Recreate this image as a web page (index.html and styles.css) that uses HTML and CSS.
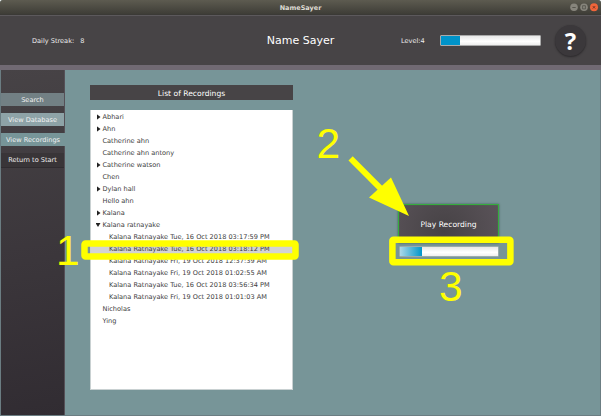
FILE: index.html
```
<!DOCTYPE html>
<html lang="en">
<head>
<meta charset="utf-8">
<title>NameSayer</title>
<link rel="stylesheet" href="styles.css">
</head>
<body>
<div class="window">
  <div class="titlebar">
    <span class="window-title">NameSayer</span>
    <svg class="controls" width="30" height="15" viewBox="0 0 30 15">
      <circle cx="4" cy="7.3" r="3.8" fill="#87857c"/>
      <path d="M2.3 7.5h3.4" stroke="#4b4a43" stroke-width=".8"/>
      <circle cx="14" cy="7.3" r="3.8" fill="#87857c"/>
      <path d="M12.6 5.7h2.8v3.2h-2.8z" fill="none" stroke="#4b4a43" stroke-width=".7"/>
      <circle cx="24" cy="7.3" r="4" fill="#f0653a"/>
      <path d="M22.8 6.1l2.4 2.4m0-2.4l-2.4 2.4" stroke="#6b3020" stroke-width=".9"/>
    </svg>
  </div>
  <header class="header">
    <div class="streak"><span>Daily Streak:</span><span>8</span></div>
    <h1 class="app-name">Name Sayer</h1>
    <div class="status">
      <span class="level">Level:4</span>
      <div class="bar level-bar"><div class="fill"></div></div>
      <div class="help">?</div>
    </div>
  </header>
  <div class="body">
    <nav class="sidebar">
      <div class="nav search">Search</div>
      <div class="nav database">View Database</div>
      <div class="nav recordings">View Recordings</div>
      <div class="nav return">Return to Start</div>
    </nav>
    <main class="main">
      <section class="list-column">
        <h2 class="list-title">List of Recordings</h2>
        <ul class="tree">
          <li class="closed">Abhari</li>
          <li class="closed">Ahn</li>
          <li>Catherine ahn</li>
          <li>Catherine ahn antony</li>
          <li class="closed">Catherine watson</li>
          <li>Chen</li>
          <li class="closed">Dylan hall</li>
          <li>Hello ahn</li>
          <li class="closed">Kalana</li>
          <li class="open">Kalana ratnayake</li>
          <li class="child">Kalana Ratnayake Tue, 16 Oct 2018 03:17:59 PM</li>
          <li class="child selected">Kalana Ratnayake Tue, 16 Oct 2018 03:18:12 PM</li>
          <li class="child">Kalana Ratnayake Fri, 19 Oct 2018 12:37:39 AM</li>
          <li class="child">Kalana Ratnayake Fri, 19 Oct 2018 01:02:55 AM</li>
          <li class="child">Kalana Ratnayake Tue, 16 Oct 2018 03:56:34 PM</li>
          <li class="child">Kalana Ratnayake Fri, 19 Oct 2018 01:01:03 AM</li>
          <li>Nicholas</li>
          <li>Ying</li>
        </ul>
      </section>
      <section class="player">
        <div class="play">Play Recording</div>
        <div class="bar play-bar"><div class="fill"></div></div>
      </section>
    </main>
  </div>
  <svg class="notes" width="601" height="416" viewBox="0 0 601 416">
    <rect x="84.5" y="243.500" width="211" height="13" rx="1"/>
    <rect x="392.4" y="239.8" width="118" height="22.4" rx="1"/>
    <path class="shaft" d="M350.6 158.4L382 189.8"/>
    <path class="head" d="M409 216L391 177.5L369 197.5Z"/>
    <text x="56" y="265">1</text>
    <text x="316.500" y="158.300">2</text>
    <text x="439" y="301">3</text>
  </svg>
</div>
</body>
</html>
```
FILE: styles.css
```
* { box-sizing: border-box; }
body { margin: 0; background: #fff; }
.window {
  position: relative;
  display: flex;
  flex-direction: column;
  width: 601px;
  height: 416px;
  overflow: hidden;
  border-radius: 3px 3px 0 0;
  background: #779598;
  font: 6.58px/12px "DejaVu Sans", sans-serif;
  color: #fff;
}
.titlebar {
  display: grid;
  grid-template-columns: 1fr auto 1fr;
  height: 15px;
  background: linear-gradient(#5d5b50, #3e3d37);
  border-bottom: 1px solid #3b3a36;
}
.window-title {
  grid-column: 2;
  font-size: 6.5px;
  line-height: 16px;
  font-weight: bold;
  color: #dfdbd2;
}
.controls { justify-self: end; margin-right: 1px; }
.header {
  display: grid;
  grid-template-columns: 200px 201px 200px;
  align-items: center;
  height: 55px;
  background: #474446;
  border-top: 1px solid #5c595c;
  border-bottom: 5px solid #716a73;
}
.streak { display: flex; gap: 6px; padding-left: 32px; color: #eee; }
.app-name { margin: 0; text-align: center; font-size: 11px; font-weight: normal; line-height: 16px; }
.status { display: flex; align-items: center; }
.level { width: 39px; color: #eee; }
.bar {
  border: 1px solid #aaa;
  border-radius: 1px;
  background: linear-gradient(#e8e8e8, #fff 60%, #eee);
}
.bar .fill { height: 100%; }
.level-bar { width: 101px; height: 11px; }
.level-bar .fill { width: 19px; background: #0093c9; }
.help {
  width: 31px;
  height: 31px;
  margin-left: 14px;
  border-radius: 50%;
  background: #3b383b;
  box-shadow: 0 1px 2px #2a282a;
  text-align: center;
  font: bold 24px/31px "Open Sans", sans-serif;
}
.body { display: flex; flex: 1; border: 1px solid #6b7d82; border-top: 0; }
.sidebar {
  display: flex;
  flex-direction: column;
  gap: 7px;
  width: 64px;
  padding-top: 23px;
  border-right: 1px solid #555057;
  background: linear-gradient(170deg, #474346, #3b363b 55%, #312c32);
}
.nav { height: 13px; line-height: 14px; text-align: center; color: #f1f1f1; white-space: nowrap; }
.search { background: #728084; }
.database { background: #8ea3a7; }
.recordings { background: #779598; margin-right: -1px; }
.return { height: 15px; background: #393538; border-bottom: 1px solid #302c30; }
.main { display: flex; flex: 1; padding: 15px 0 0 25px; }
.list-column { width: 203px; }
.list-title {
  height: 15px;
  margin: 0 0 10px;
  background: #474446;
  text-align: center;
  font-size: 7.6px;
  line-height: 17px;
  font-weight: normal;
}
.tree {
  height: 280px;
  margin: 0;
  padding: 1px 0;
  border: solid #c9d1d2;
  border-width: 0 1px 1px;
  background: #fff;
  list-style: none;
  color: #3d3d3d;
}
.tree li { display: flex; align-items: center; height: 12px; padding-left: 11.5px; line-height: 13px; white-space: nowrap; }
.tree .child { padding-left: 18px; }
.tree .selected { background: #d3d3d3; }
.closed::before, .open::before {
  content: "";
  width: 4px;
  height: 6px;
  margin: 0 2px 0 -6px;
  background: #222;
  clip-path: polygon(0 0, 100% 50%, 0 100%);
}
.tree .open::before { width: 5px; height: 4px; margin: 0 2px 0 -7px; clip-path: polygon(0 0, 100% 0, 50% 100%); }
.player { width: 101px; margin: 119px 0 0 105px; }
.play {
  height: 39px;
  border: 1.5px solid #36ad3e;
  box-shadow: 0 0 2px #405c55, inset 0 0 1px #36ad3e;
  background: radial-gradient(circle at 45% 70%, #464245, #5a5359);
  text-align: center;
  font-size: 7.6px;
  line-height: 39px;
}
.play-bar { height: 11px; margin: 3px 0 0 .5px; border-color: #9aabac; }
.play-bar .fill { width: 22px; background: linear-gradient(90deg, #acd8e8, #0096c9); }
.notes { position: absolute; top: 0; left: 0; }
.notes rect { fill: none; stroke: #ff0; stroke-width: 6.5px; }
.notes .shaft { stroke: #ff0; stroke-width: 6px; }
.notes .head { fill: #ff0; }
.notes text { fill: #ff0; font: 42.5px "Liberation Sans", sans-serif; }
```
